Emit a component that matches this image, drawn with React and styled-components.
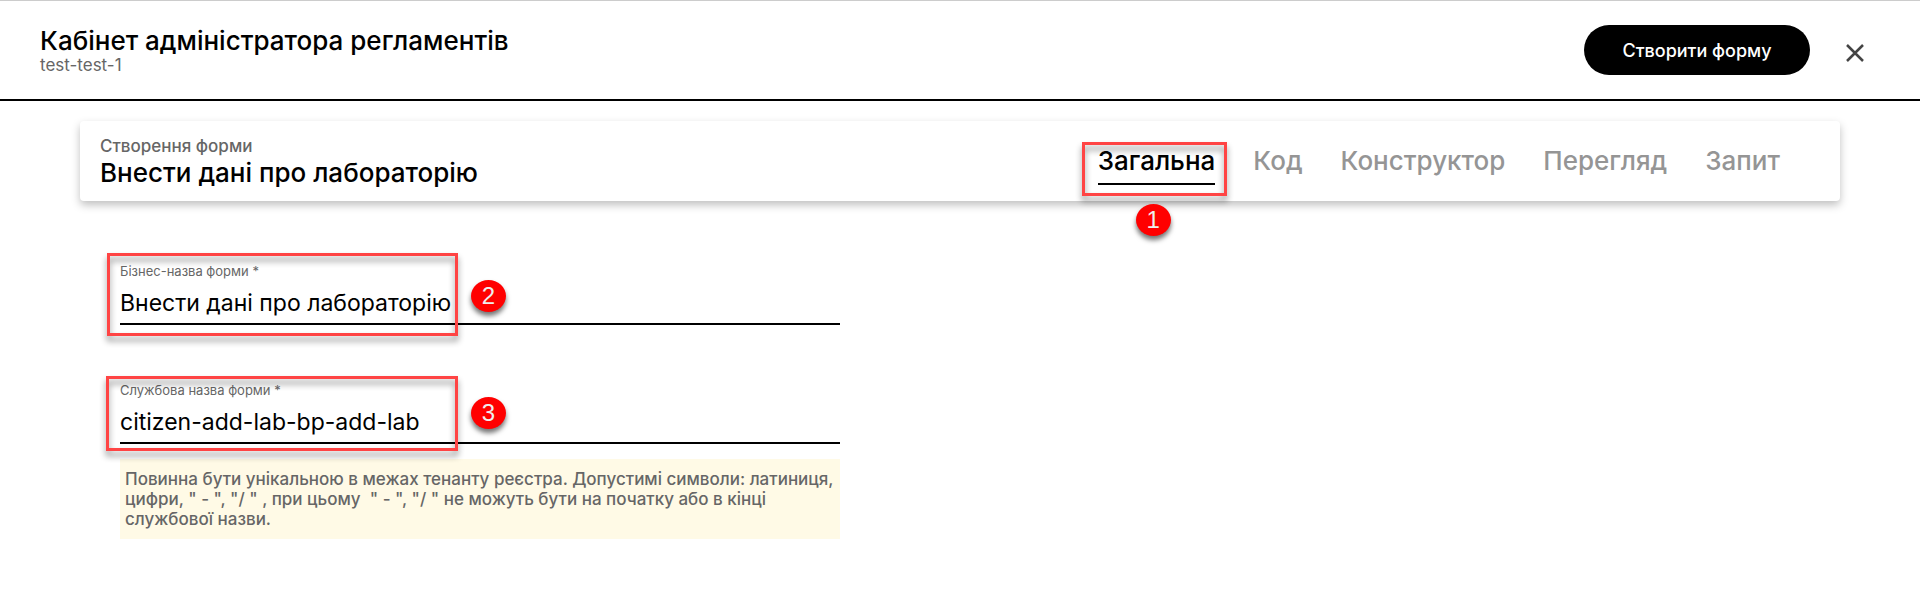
import React, { useState } from "react";
import styled, { createGlobalStyle } from "styled-components";

const GlobalStyle = createGlobalStyle`
  *, *::before, *::after { box-sizing: border-box; }
  body {
    margin: 0;
    background: #fff;
    color: #000;
    font-family: Inter, "Liberation Sans", sans-serif;
  }
  button, input { font-family: inherit; }
`;

const Header = styled.header`
  display: flex;
  align-items: center;
  justify-content: space-between;
  padding: 24px 52px 24px 40px;
  border-top: 1px solid #ccc;
  border-bottom: 2px solid #000;
`;

const Title = styled.h1`
  margin: 0;
  font-size: 26px;
  line-height: 30px;
  font-weight: 500;
`;

const Subtitle = styled.p`
  margin: 0;
  font-size: 17px;
  line-height: 18px;
  color: #666;
`;

const Actions = styled.div`
  display: flex;
  align-items: center;
  gap: 32px;
`;

const PrimaryButton = styled.button`
  min-width: 226px;
  height: 50px;
  padding: 0 36px;
  border: 0;
  border-radius: 25px;
  background: #000;
  color: #fff;
  font-size: 18px;
  font-weight: 500;
`;

const IconButton = styled.button`
  display: flex;
  padding: 6px 0 0;
  border: 0;
  background: none;
`;

const Main = styled.main`
  padding: 20px 80px 50px;
`;

const Card = styled.section`
  display: flex;
  align-items: center;
  justify-content: space-between;
  height: 80px;
  padding: 0 60px 0 20px;
  border-radius: 4px;
  background: #fff;
  box-shadow: 0 4px 8px rgba(0, 0, 0, 0.25);
`;

const CardHeading = styled.div`
  padding-top: 2px;
`;

const Overline = styled.p`
  margin: 0;
  font-size: 17px;
  line-height: 22px;
  font-weight: 500;
  color: #666;
`;

const FormName = styled.h2`
  margin: 0;
  font-size: 26px;
  line-height: 32px;
  font-weight: 500;
`;

const Tabs = styled.div`
  display: flex;
  gap: 38px;
`;

const Tab = styled.button`
  position: relative;
  padding: 8px 0 6px;
  border: 0;
  border-bottom: 2px solid ${(p) => (p.$active ? "#000" : "transparent")};
  background: none;
  color: ${(p) => (p.$active ? "#000" : "#959595")};
  font-size: 26px;
  line-height: 32px;
  font-weight: 500;
`;

const Frame = styled.span`
  position: absolute;
  top: ${(p) => p.$top}px;
  left: ${(p) => p.$left}px;
  width: ${(p) => p.$width}px;
  height: ${(p) => p.$height}px;
  border: 3px solid #ff4444;
  filter: drop-shadow(0 5px 3px rgba(0, 0, 0, 0.45));
  pointer-events: none;
`;

const Badge = styled.span`
  position: absolute;
  top: ${(p) => p.$top}px;
  left: ${(p) => p.$left}px;
  width: 35px;
  height: 32px;
  border-radius: 50%;
  background: #f00;
  box-shadow: 0 4px 5px rgba(0, 0, 0, 0.55);
  color: #eee;
  font-family: "Liberation Sans", sans-serif;
  font-size: 24px;
  line-height: 32px;
  font-weight: 400;
  text-align: center;
  pointer-events: none;
`;

const Form = styled.form`
  display: flex;
  flex-direction: column;
  gap: 57px;
  max-width: 760px;
  padding: 62px 0 0 40px;
`;

const Field = styled.div`
  position: relative;
  display: flex;
  flex-direction: column;
`;

const Label = styled.label`
  font-size: 13px;
  line-height: 16px;
  color: #666;
`;

const Input = styled.input`
  width: 100%;
  height: 46px;
  padding: 12px 0 8px;
  border: 0;
  border-bottom: 2px solid #000;
  border-radius: 0;
  outline: 0;
  background: none;
  color: #000;
  font-size: 23px;
  line-height: 24px;
`;

const Hint = styled.p`
  margin: 15px 0 0;
  padding: 10px 5px;
  background: #fffae6;
  color: #666;
  font-size: 17px;
  line-height: 20px;
  font-weight: 500;
  white-space: pre-line;
`;

const tabs = ["Загальна", "Код", "Конструктор", "Перегляд", "Запит"];

const hint =
  'Повинна бути унікальною в межах тенанту реєстра. Допустимі символи: латиниця,\nцифри, " - ", "/ " , при цьому \u00a0" - ", "/ " не можуть бути на початку або в кінці\nслужбової назви.';

export default function App() {
  const [active, setActive] = useState(0);
  return (
    <>
      <GlobalStyle />
      <Header>
        <div>
          <Title>Кабінет адміністратора регламентів</Title>
          <Subtitle>test-test-1</Subtitle>
        </div>
        <Actions>
          <PrimaryButton type="button">Створити форму</PrimaryButton>
          <IconButton type="button" aria-label="Закрити">
            <svg width="26" height="26" viewBox="0 0 26 26" fill="none" stroke="#444" strokeWidth="2.5">
              <path d="M5 5L21 21M21 5L5 21" />
            </svg>
          </IconButton>
        </Actions>
      </Header>
      <Main>
        <Card>
          <CardHeading>
            <Overline>Створення форми</Overline>
            <FormName>Внести дані про лабораторію</FormName>
          </CardHeading>
          <Tabs role="tablist">
            {tabs.map((name, i) => (
              <Tab
                key={name}
                type="button"
                role="tab"
                aria-selected={active === i}
                $active={active === i}
                onClick={() => setActive(i)}
              >
                {name}
                {i === 0 && (
                  <>
                    <Frame $top={5} $left={-16} $width={145} $height={54} />
                    <Badge $top={67} $left={38}>1</Badge>
                  </>
                )}
              </Tab>
            ))}
          </Tabs>
        </Card>
        <Form>
          <Field>
            <Label htmlFor="title">Бізнес-назва форми *</Label>
            <Input id="title" defaultValue="Внести дані про лабораторію" />
            <Frame $top={-10} $left={-13} $width={351} $height={83} />
            <Badge $top={17} $left={351}>2</Badge>
          </Field>
          <Field>
            <Label htmlFor="name">Службова назва форми *</Label>
            <Input id="name" defaultValue="citizen-add-lab-bp-add-lab" />
            <Hint>{hint}</Hint>
            <Frame $top={-6} $left={-14} $width={352} $height={75} />
            <Badge $top={15} $left={351}>3</Badge>
          </Field>
        </Form>
      </Main>
    </>
  );
}
